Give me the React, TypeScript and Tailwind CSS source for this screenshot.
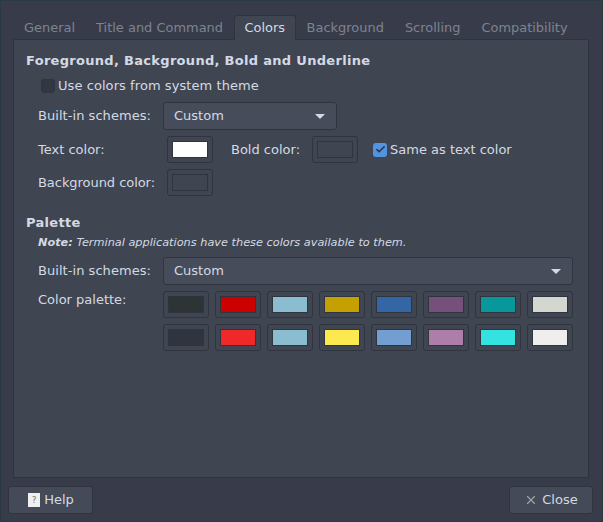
import { Check, X } from 'lucide-react';

const palette = [
  ['#2e3436', '#cc0000', '#89bdcf', '#c4a000', '#3465a4', '#75507b', '#06989a', '#d3d7cf'],
  ['#2f343f', '#ef2929', '#89bdcf', '#fce94f', '#729fcf', '#ad7fa8', '#34e2e2', '#eeeeec'],
];

const tabs = ['General', 'Title and Command', 'Colors', 'Background', 'Scrolling', 'Compatibility'];

function Swatch({ color, className = '' }: { color: string; className?: string }) {
  return (
    <div className={`w-[46px] h-[27px] shrink-0 rounded-[3px] border border-[#2f343f] bg-[#404552] flex items-center justify-center ${className}`}>
      <div className="w-[36px] h-[17px] border border-[#2f343f]" style={{ background: color }} />
    </div>
  );
}

function Select({ className = '' }: { className?: string }) {
  return (
    <div className={`h-[28px] rounded-[3px] border border-[#2f343f] bg-[#474c5a] flex items-center justify-between pl-[10px] pr-[11px] ${className}`}>
      <span>Custom</span>
      <span className="w-0 h-0 border-x-[5px] border-x-transparent border-t-[5px] border-t-[#d3dae3]" />
    </div>
  );
}

export default function App() {
  return (
    <div
      className="relative w-[603px] h-[522px] bg-[#383c4a] border border-[#2b3a40] flex flex-col text-[13px] leading-[16px] text-[#d3dae3] overflow-hidden"
      style={{ fontFamily: '"DejaVu Sans", sans-serif' }}
    >
      {/* bits of other windows showing at the edges */}
      <div className="absolute -top-px left-[87px] w-[200px] h-px bg-[#3a3d10] border-x-[5px] border-black" />
      <div className="absolute -top-px left-[350px] w-[6px] h-px bg-[#6a6d70]" />
      <div className="absolute -bottom-px left-[148px] w-[9px] h-px bg-[#5a1238]" />

      {/* Tabs */}
      <div className="h-[38px] ml-[12.5px] pt-[14px] flex items-stretch text-[12.96px] text-[#7d8390]">
        {tabs.map(t => (
          <div
            key={t}
            className={
              t === 'Colors'
                ? 'px-[10px] bg-[#404552] border border-b-0 border-[#2f343f] rounded-t-[3px] text-[#d3dae3] pt-[4px] relative z-10 -mb-[1px]'
                : 'px-[10.5px] pt-[5px]'
            }
          >
            {t}
          </div>
        ))}
      </div>

      {/* Panel */}
      <div className="ml-[12px] mr-[13px] h-[439px] bg-[#404552] border border-[#2f343f] pt-[13px] pl-[12px] pr-[15px]">
        <div className="font-bold tracking-[0.3px] h-[16px]">Foreground, Background, Bold and Underline</div>

        <div className="flex items-center mt-[9px] ml-[15px] h-[16px]">
          <div className="w-[14px] h-[14px] rounded-[3px] border border-[#2f343f] bg-[#333744] mr-[3px]" />
          <span className="tracking-[0.07px]">Use colors from system theme</span>
        </div>

        <div className="flex items-center mt-[8px] ml-[12px]">
          <span className="w-[125px] tracking-[0.05px]">Built-in schemes:</span>
          <Select className="w-[174px]" />
        </div>

        <div className="flex items-center mt-[6px] ml-[12px]">
          <span className="w-[129px]">Text color:</span>
          <Swatch color="#ffffff" />
          <span className="ml-[18px] w-[81px]">Bold color:</span>
          <Swatch color="#404552" />
          <div className="ml-[15px] w-[14px] h-[14px] rounded-[3px] bg-[#5294e2] flex items-center justify-center mr-[3px]">
            <Check size={11} strokeWidth={3.5} className="text-[#2f343f]" />
          </div>
          <span>Same as text color</span>
        </div>

        <div className="flex items-center mt-[6px] ml-[12px]">
          <span className="w-[129px] tracking-[-0.05px]">Background color:</span>
          <Swatch color="#404552" />
        </div>

        <div className="font-bold tracking-[0.3px] mt-[19px] h-[16px]">Palette</div>

        <div className="ml-[12px] mt-[5px] text-[11.3px] h-[14px] leading-[14px] italic">
          <span className="font-bold">Note:</span> Terminal applications have these colors available to them.
        </div>

        <div className="flex items-center mt-[7px] ml-[12px]">
          <span className="w-[125px] tracking-[0.05px]">Built-in schemes:</span>
          <Select className="flex-1" />
        </div>

        <div className="flex mt-[6px] ml-[12px]">
          <span className="w-[125px] pt-[1px]">Color palette:</span>
          <div className="flex-1 flex flex-col gap-[6px]">
            {palette.map((row, i) => (
              <div key={i} className="flex justify-between">
                {row.map((c, j) => <Swatch key={j} color={c} />)}
              </div>
            ))}
          </div>
        </div>
      </div>

      {/* Buttons */}
      <div className="flex justify-between ml-[7px] mr-[9px] mt-[8px]">
        <div className="w-[85px] h-[28px] rounded-[3px] border border-[#2f343f] bg-[#444a58] flex items-center justify-center gap-[4px] pl-[1px]">
          <div className="w-[12px] h-[14px] bg-[#f0f0f0] text-[#777] text-[9px] leading-[14px] text-center">?</div>
          <span>Help</span>
        </div>
        <div className="w-[84px] h-[28px] rounded-[3px] border border-[#2f343f] bg-[#444a58] flex items-center justify-center gap-[4px]">
          <X size={14} strokeWidth={2} className="text-[#9da3ad]" />
          <span>Close</span>
        </div>
      </div>
    </div>
  );
}
